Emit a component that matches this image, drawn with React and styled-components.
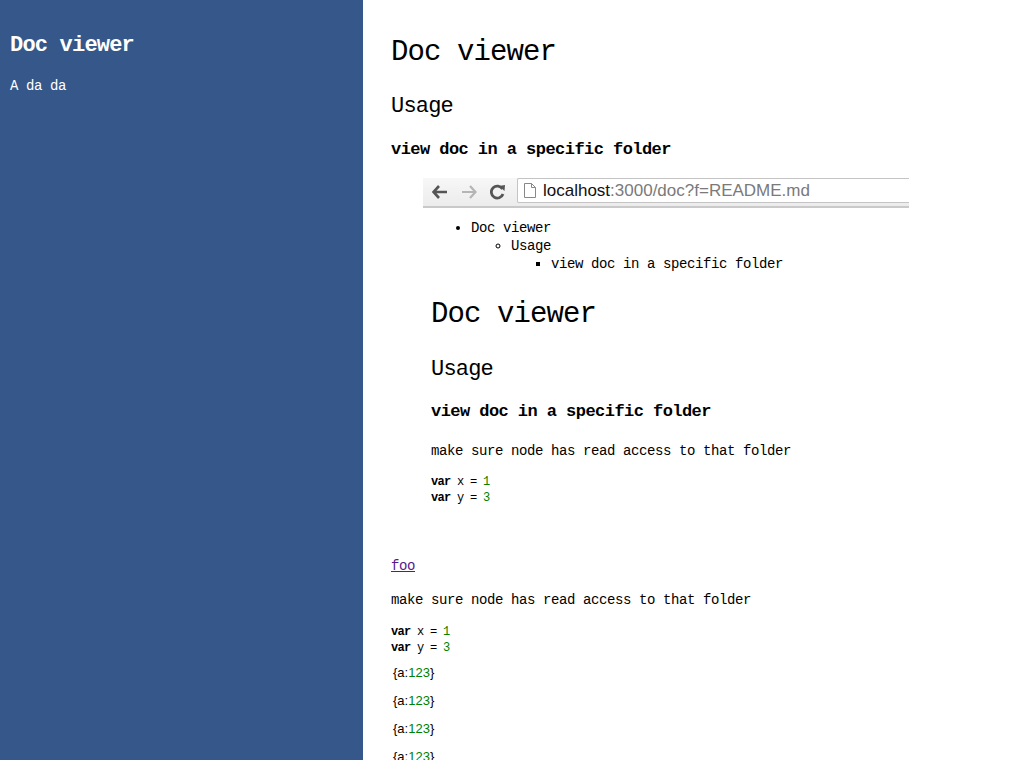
import styled, { createGlobalStyle } from "styled-components";

const Global = createGlobalStyle`
  html, body {
    margin: 0;
    padding: 0;
    background: #fff;
  }
  body {
    font-family: "Liberation Mono", "DejaVu Sans Mono", monospace;
    color: #000;
  }
`;

const Page = styled.div`
  display: flex;
  height: 760px;
  overflow: hidden;
`;

const Sidebar = styled.aside`
  width: 363px;
  flex-shrink: 0;
  background: #35578a;
  color: #fff;
  padding: 0 10px;
  box-sizing: border-box;
`;

const SideTitle = styled.h2`
  margin: 34px 0 0;
  font-size: 22px;
  line-height: 24px;
  letter-spacing: -0.8px;
  font-weight: bold;
`;

const SideText = styled.p`
  margin: 19px 0 0;
  font-size: 14px;
  line-height: 18px;
  letter-spacing: -0.4px;
`;

const Main = styled.main`
  flex: 1;
  padding-left: 28px;
`;

const H1 = styled.h1`
  margin: ${(p) => p.$top}px 0 0;
  font-size: 29px;
  line-height: 36px;
  letter-spacing: -0.9px;
  font-weight: normal;
`;

const H2 = styled.h2`
  margin: ${(p) => p.$top}px 0 0;
  font-size: 22px;
  line-height: 30px;
  letter-spacing: -0.8px;
  font-weight: normal;
`;

const H3 = styled.h3`
  margin: ${(p) => p.$top}px 0 0;
  font-size: 17px;
  line-height: 22px;
  letter-spacing: -0.55px;
  font-weight: bold;
`;

const Para = styled.p`
  margin: ${(p) => p.$top}px 0 0;
  font-size: 14px;
  line-height: 18px;
  letter-spacing: -0.4px;
`;

const Code = styled.pre`
  margin: ${(p) => p.$top}px 0 0;
  font-family: "Liberation Mono", monospace;
  font-size: 12px;
  line-height: 16px;
  letter-spacing: -0.7px;
`;

const Kw = styled.span`
  font-weight: bold;
  color: #000;
`;

const Num = styled.span`
  color: #008000;
`;

const Obj = styled.pre`
  margin: ${(p) => p.$top}px 0 0 2px;
  font-family: "Liberation Sans", Arial, sans-serif;
  font-size: 13px;
  line-height: 18px;
`;

const Link = styled.a`
  display: block;
  width: fit-content;
  margin-top: 36px;
  font-size: 14px;
  line-height: 18px;
  letter-spacing: -0.4px;
  color: #551a8b;
  text-decoration: underline;
`;

/* the embedded screenshot */
const Shot = styled.div`
  margin: 17px 0 0 32px;
  width: 486px;
  padding-bottom: 15px;
`;

const Toolbar = styled.div`
  display: flex;
  align-items: center;
  gap: 13px;
  height: 28px;
  background: linear-gradient(#f7f7f7, #ececec);
  border-bottom: 2px solid #c9c9c9;
  padding-left: 9px;
`;

const NavBtn = styled.div`
  width: 16px;
  height: 24px;
  display: flex;
  align-items: center;
`;

const Url = styled.div`
  flex: 1;
  align-self: stretch;
  display: flex;
  align-items: center;
  gap: 7px;
  margin: 0 0 3px -2px;
  padding-left: 6px;
  background: #fff;
  border: 1px solid #c4c4c4;
  border-right: none;
  border-radius: 2px 0 0 2px;
  font-family: "Liberation Sans", Arial, sans-serif;
  font-size: 17px;
  color: #7a7a7a;
`;

const Host = styled.span`
  color: #111;
`;

const ShotBody = styled.div`
  padding-left: 8px;
`;

const List = styled.ul`
  margin: ${(p) => p.$top || 0}px 0 0;
  padding-left: 40px;
  list-style-type: ${(p) => p.$type};
  font-size: 14px;
  line-height: 18px;
  letter-spacing: -0.4px;
`;

const Back = ({ color }) => (
  <svg width="16" height="14" viewBox="0 0 16 14">
    <path d="M7 1 L1.5 7 L7 13 M2 7 H15" fill="none" stroke={color} strokeWidth="2.6" />
  </svg>
);

const Forward = ({ color }) => (
  <svg width="16" height="14" viewBox="0 0 16 14">
    <path d="M9 1 L14.5 7 L9 13 M1 7 H14" fill="none" stroke={color} strokeWidth="2.2" />
  </svg>
);

const Reload = () => (
  <svg width="16" height="16" viewBox="0 0 16 16">
    <path d="M12.5 5 A6 6 0 1 0 13 10" fill="none" stroke="#555" strokeWidth="2.8" />
    <path d="M9 2 L15 1 L14.5 7 Z" fill="#555" />
  </svg>
);

const FileIcon = () => (
  <svg width="12" height="15" viewBox="0 0 12 15">
    <path d="M0.5 0.5 H7.5 L11.5 4.5 V14.5 H0.5 Z M7.5 0.5 V4.5 H11.5" fill="#fff" stroke="#888" strokeWidth="1" />
  </svg>
);

const VarBlock = ({ top }) => (
  <Code $top={top}>
    <Kw>var</Kw> x = <Num>1</Num>
    {"\n"}
    <Kw>var</Kw> y = <Num>3</Num>
  </Code>
);

const App = () => {
  return (
    <Page>
      <Global />
      <Sidebar>
        <SideTitle>Doc viewer</SideTitle>
        <SideText>A da da</SideText>
      </Sidebar>

      <Main>
        <H1 $top={35}>Doc viewer</H1>
        <H2 $top={21}>Usage</H2>
        <H3 $top={17}>view doc in a specific folder</H3>

        <Shot>
          <Toolbar>
            <NavBtn>
              <Back color="#555" />
            </NavBtn>
            <NavBtn>
              <Forward color="#b5b5b5" />
            </NavBtn>
            <NavBtn>
              <Reload />
            </NavBtn>
            <Url>
              <FileIcon />
              <span>
                <Host>localhost</Host>:3000/doc?f=README.md
              </span>
            </Url>
          </Toolbar>

          <ShotBody>
            <List $type="disc" $top={11}>
              <li>
                Doc viewer
                <List $type="circle">
                  <li>
                    Usage
                    <List $type="square">
                      <li>view doc in a specific folder</li>
                    </List>
                  </li>
                </List>
              </li>
            </List>
            <H1 $top={24}>Doc viewer</H1>
            <H2 $top={22}>Usage</H2>
            <H3 $top={16}>view doc in a specific folder</H3>
            <Para $top={19}>make sure node has read access to that folder</Para>
            <VarBlock top={14} />
          </ShotBody>
        </Shot>

        <Link href="#">foo</Link>
        <Para $top={16}>make sure node has read access to that folder</Para>
        <VarBlock top={15} />
        {[0, 1, 2, 3].map((i) => (
          <Obj key={i} $top={i === 0 ? 8 : 10}>
            {"{a:"}
            <Num>123</Num>
            {"}"}
          </Obj>
        ))}
      </Main>
    </Page>
  );
};

export default App;
